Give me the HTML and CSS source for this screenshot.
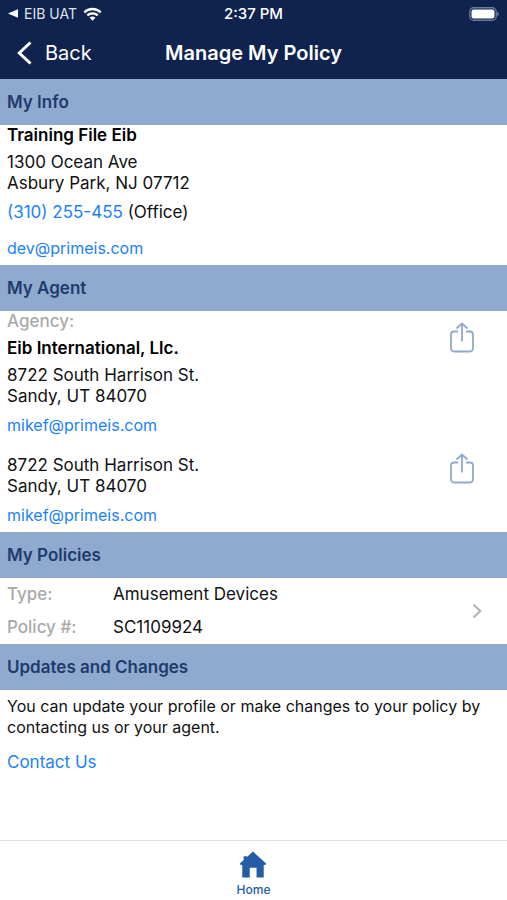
FILE: index.html
```html
<!DOCTYPE html>
<html lang="en">
<head>
<meta charset="utf-8">
<meta name="viewport" content="width=device-width, initial-scale=1">
<title>Manage My Policy</title>
<link rel="stylesheet" href="styles.css">
</head>
<body>
<header class="top">
  <div class="status">
    <div class="status-left">
      <svg class="return" width="10" height="9" viewBox="0 0 10 9" aria-hidden="true"><path d="M0 4.500 10 .3v8.400z" fill="currentColor"/></svg>
      <span>EIB UAT</span>
      <svg class="wifi" width="19" height="14" viewBox="0 0 19 14" aria-hidden="true">
        <path d="M1.300 5.300a11.800 11.800 0 0 1 16.400 0M4.300 8.400a7.500 7.500 0 0 1 10.400 0" fill="none" stroke="currentColor" stroke-width="2.300"/>
        <path d="M6.600 10.800a4.200 4.200 0 0 1 5.800 0L9.500 13.800z" fill="currentColor"/>
      </svg>
    </div>
    <time class="clock">2:37 PM</time>
    <div class="status-right">
      <svg width="31" height="14" viewBox="0 0 31 14" aria-hidden="true">
        <rect x="1.750" y=".75" width="26.500" height="12.500" rx="4" fill="none" stroke="#6f7a98" stroke-width="1.300"/>
        <rect x="3.500" y="2.500" width="23" height="9" rx="2" fill="#fff"/>
        <path d="M29.300 4.800q1.700 .7 1.700 2.200t-1.700 2.200z" fill="#6f7a98"/>
      </svg>
    </div>
  </div>
  <nav class="nav">
    <button class="back" type="button">
      <svg width="16" height="24" viewBox="0 0 16 24" aria-hidden="true"><path d="M14.500 1.500 3.300 12l11.200 10.500" fill="none" stroke="currentColor" stroke-width="3"/></svg>
      <span>Back</span>
    </button>
    <h1 class="title">Manage My Policy</h1>
  </nav>
</header>

<main class="content">
  <h2 class="heading">My Info</h2>
  <section class="info">
    <p class="name">Training File Eib</p>
    <address class="address">1300 Ocean Ave<br>Asbury Park, NJ 07712</address>
    <p class="contact"><a href="tel:310255455">(310) 255-455</a> (Office)</p>
    <p class="email"><a href="mailto:dev@primeis.com">dev@primeis.com</a></p>
  </section>

  <h2 class="heading">My Agent</h2>
  <section class="agent">
    <div class="details">
      <p class="label">Agency:</p>
      <p class="name agency-name">Eib International, Llc.</p>
      <address class="address">8722 South Harrison St.<br>Sandy, UT 84070</address>
      <p class="contact email-line"><a href="mailto:mikef@primeis.com">mikef@primeis.com</a></p>
    </div>
    <button class="share" type="button" aria-label="Share agency">
      <svg width="24" height="32" viewBox="0 0 24 32" aria-hidden="true"><path d="M8 9.500H4a3 3 0 0 0-3 3v14a3 3 0 0 0 3 3h16a3 3 0 0 0 3-3v-14a3 3 0 0 0-3-3h-4M12 19.500V1.500M6.500 6.500 12 1.500l5.500 5" fill="none" stroke="currentColor" stroke-width="1.800"/></svg>
    </button>
  </section>
  <section class="agent">
    <div class="details details-second">
      <address class="address">8722 South Harrison St.<br>Sandy, UT 84070</address>
      <p class="contact email-line"><a href="mailto:mikef@primeis.com">mikef@primeis.com</a></p>
    </div>
    <button class="share" type="button" aria-label="Share agent">
      <svg width="24" height="32" viewBox="0 0 24 32" aria-hidden="true"><path d="M8 9.500H4a3 3 0 0 0-3 3v14a3 3 0 0 0 3 3h16a3 3 0 0 0 3-3v-14a3 3 0 0 0-3-3h-4M12 19.500V1.500M6.500 6.500 12 1.500l5.500 5" fill="none" stroke="currentColor" stroke-width="1.800"/></svg>
    </button>
  </section>

  <h2 class="heading">My Policies</h2>
  <a class="policy" href="#policy">
    <dl class="fields">
      <dt class="label">Type:</dt><dd>Amusement Devices</dd>
      <dt class="label">Policy #:</dt><dd>SC1109924</dd>
    </dl>
    <svg width="10" height="16" viewBox="0 0 10 16" aria-hidden="true"><path d="M1.500 1.500 8.200 8l-6.700 6.500" fill="none" stroke="currentColor" stroke-width="2.200"/></svg>
  </a>

  <h2 class="heading">Updates and Changes</h2>
  <section class="updates">
    <p class="note">You can update your profile or make changes to your policy by contacting us or your agent.</p>
    <p class="contact-us"><a href="#contact">Contact Us</a></p>
  </section>
</main>

<footer class="tabs">
  <a class="tab" href="#home">
    <svg width="30" height="30" viewBox="0 0 30 30" aria-hidden="true"><path d="M15 .5 29.300 13.600 28 15H26.500V28.500h-7.700V18h-7.300v10.500H3.500V15H2L.7 13.600 5 9.600V5.500h3.500v1z" fill="currentColor"/></svg>
    <span>Home</span>
  </a>
</footer>
</body>
</html>
```

FILE: styles.css
```css
* {
  box-sizing: border-box;
}

body {
  display: flex;
  flex-direction: column;
  min-height: 100vh;
  margin: 0;
  background: #fff;
  color: #111;
  font: 17px/21px Inter, "Liberation Sans", sans-serif;
}

h1, h2, p, dl, dd {
  margin: 0;
}

a {
  color: #1a82f7;
  text-decoration: none;
}

button {
  padding: 0;
  border: 0;
  background: none;
  font: inherit;
}

svg {
  display: block;
}

.top {
  background: #10234f;
  color: #fff;
}

.status {
  display: grid;
  grid-template-columns: 1fr auto 1fr;
  align-items: center;
  height: 27px;
  padding: 0 8px;
  font-size: 14px;
}

.status-left {
  display: flex;
  align-items: center;
  gap: 6px;
  color: #dfe3ee;
}

.return,
.wifi {
  color: #fff;
}

.clock {
  font-size: 15px;
  font-weight: 500;
}

.status-right {
  display: flex;
  justify-content: flex-end;
}

.nav {
  display: grid;
  grid-template-columns: 1fr auto 1fr;
  align-items: center;
  height: 52px;
  padding: 0 16px;
  font-size: 20px;
}

.back {
  display: flex;
  align-items: center;
  gap: 13px;
  color: #fff;
}

.title {
  font-size: 20px;
  font-weight: 600;
}

.content {
  flex: 1;
}

.heading {
  padding: 13px 7px 12px;
  background: #90a9cf;
  color: #1d3b6c;
  font-size: 17px;
  font-weight: 600;
}

.info {
  padding: 0 7px 6px;
}

.name {
  color: #000;
  font-weight: 600;
}

.address {
  margin-top: 6px;
  font-style: normal;
}

.contact {
  margin-top: 8px;
}

.email {
  margin-top: 15px;
}

.email,
.email-line,
.note {
  font-size: 16px;
}

.label {
  color: #a9a9a9;
  font-weight: 500;
}

.agent {
  display: flex;
  justify-content: space-between;
  align-items: flex-start;
  padding: 0 33px 6px 7px;
}

.agency-name {
  margin-top: 6px;
}

.details-second {
  padding-top: 7px;
}

.share {
  margin-top: 11px;
  color: #90a9cf;
}

.policy {
  display: flex;
  justify-content: space-between;
  align-items: center;
  padding: 6px 25px 6px 7px;
  color: #b5b5b5;
}

.fields {
  display: grid;
  grid-template-columns: 106px 1fr;
  row-gap: 12px;
}

.fields dd {
  color: #111;
}

.updates {
  padding: 6px 7px;
}

.contact-us {
  margin-top: 14px;
}

.tabs {
  display: flex;
  justify-content: center;
  height: 60px;
  border-top: 1px solid #dedede;
}

.tab {
  display: flex;
  flex-direction: column;
  align-items: center;
  padding-top: 10px;
  color: #235da6;
  font-size: 12px;
  font-weight: 500;
}
```
